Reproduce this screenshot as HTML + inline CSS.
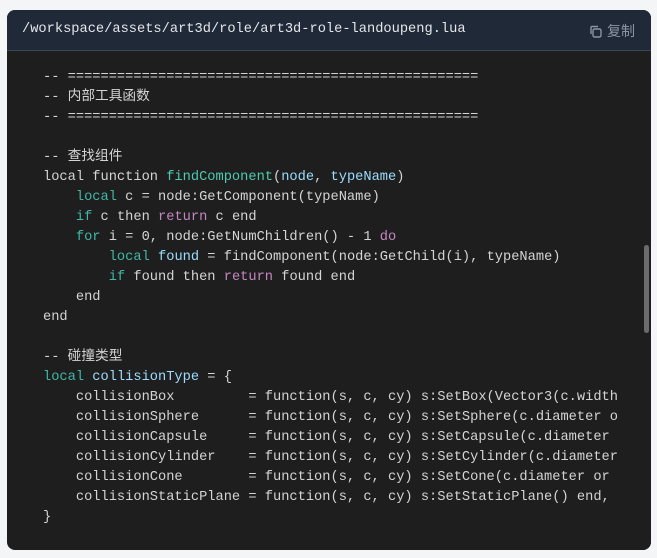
<!DOCTYPE html>
<html><head><meta charset="utf-8"><style>
html,body{margin:0;padding:0;background:#f3f5f7;width:657px;height:558px;overflow:hidden}
.card{position:absolute;left:7px;top:10px;width:644px;height:540px;border-radius:8px;overflow:hidden;background:#1e1e1e}
.hd{height:41px;background:#1f2937;border-bottom:1px solid #3a4556;box-sizing:border-box;position:relative}
.hd .p{position:absolute;left:15px;top:12px;font:13.7px "Liberation Mono",monospace;color:#e5e7eb}
.hd .c{position:absolute;right:16px;top:11px;font:14px "Liberation Sans","Noto Sans CJK SC",sans-serif;color:#8b95a3;display:flex;align-items:center;gap:5px}
.code{position:absolute;left:0;top:41px;width:634px;height:499px;overflow:hidden}
pre{margin:0;position:absolute;left:36px;top:17px;font:13.7px/20px "Liberation Mono","Noto Sans CJK SC",monospace;color:#d4d4d4;white-space:pre}
.k{color:#3fb8a6}.f{color:#4ec9b0}.v{color:#9cdcfe}.r{color:#c586c0}.n{color:#b5cea8}
.sb{position:absolute;right:0;top:41px;width:10px;height:499px;background:#1e1e1e}
.th{position:absolute;left:3px;top:194px;width:5px;height:88px;border-radius:3px;background:#6b6b6b}
</style></head><body>
<div class="card">
<div class="hd"><span class="p">/workspace/assets/art3d/role/art3d-role-landoupeng.lua</span>
<span class="c"><svg width="13" height="13" viewBox="0 0 13 13" fill="none" stroke="#8b95a3" stroke-width="1.4"><rect x="4" y="4" width="8" height="8" rx="1.5"/><path d="M2 9V2.5A1 1 0 0 1 3 1.5H9"/></svg>复制</span></div>
<div class="code"><pre>-- ==================================================
-- 内部工具函数
-- ==================================================

-- 查找组件
local function <span class="f">findComponent</span>(<span class="v">node</span>, <span class="v">typeName</span>)
    <span class="k">local</span> c = node:GetComponent(typeName)
    <span class="k">if</span> c then <span class="r">return</span> c end
    <span class="k">for</span> i = 0, node:GetNumChildren() - 1 <span class="r">do</span>
        <span class="k">local</span> <span class="v">found</span> = findComponent(node:GetChild(i), typeName)
        <span class="k">if</span> found then <span class="r">return</span> found end
    end
end

-- 碰撞类型
<span class="k">local</span> <span class="v">collisionType</span> = {
    collisionBox         = function(s, c, cy) s:SetBox(Vector3(c.width
    collisionSphere      = function(s, c, cy) s:SetSphere(c.diameter o
    collisionCapsule     = function(s, c, cy) s:SetCapsule(c.diameter 
    collisionCylinder    = function(s, c, cy) s:SetCylinder(c.diameter
    collisionCone        = function(s, c, cy) s:SetCone(c.diameter or 
    collisionStaticPlane = function(s, c, cy) s:SetStaticPlane() end,
}</pre></div>
<div class="sb"><div class="th"></div></div>
</div>
</body></html>
